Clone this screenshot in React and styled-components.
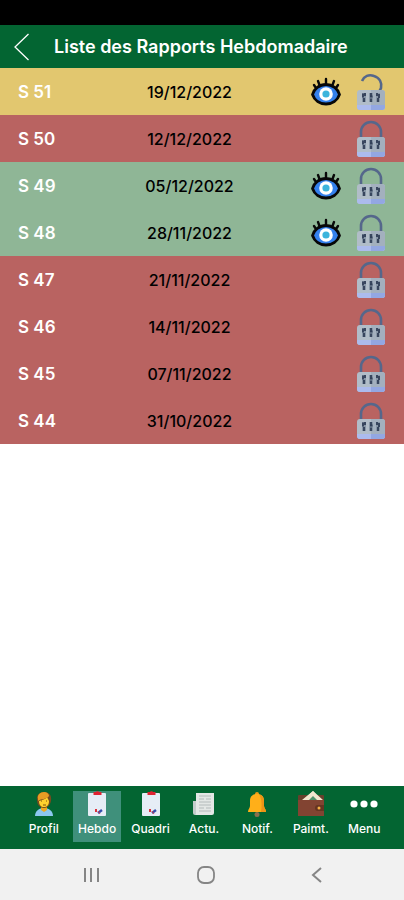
import React, { useState } from "react"
import styled, { createGlobalStyle } from "styled-components"

const GlobalStyle = createGlobalStyle`
    * {
        box-sizing: border-box;
    }

    body {
        margin: 0;

        background: #fff;
        font-family: Inter, "Open Sans", "Liberation Sans", sans-serif;
    }

    button {
        margin: 0;
        padding: 0;

        border: 0;
        background: none;
        font: inherit;
        color: inherit;
        cursor: pointer;
    }

    svg {
        display: block;
    }
`

const StyledScreen = styled.div`
    min-height: 100vh;

    display: flex;
    flex-direction: column;
`

const StyledStatusBar = styled.div`
    height: 25px;

    background: #000;
`

const StyledHeader = styled.header`
    height: 43px;
    padding: 0 14px;

    display: flex;
    align-items: center;
    gap: 24px;

    background: #036532;
    color: #fff;
`

const StyledTitle = styled.h1`
    margin: 0;

    font-size: 18px;
    font-weight: 600;
    line-height: 24px;
    white-space: nowrap;
`

const StyledMain = styled.main`
    flex: 1;
`

const StyledTable = styled.table`
    width: 100%;

    border-collapse: collapse;
    table-layout: fixed;
`

const rowColors = {
    open: "#e2c76f",
    missed: "#b96361",
    done: "#8fb696",
}

const StyledRow = styled.tr`
    height: 47px;

    background: ${props => rowColors[props.$status]};
`

const StyledWeek = styled.th`
    width: 76px;
    padding: 0 0 0 18px;

    color: #fff;
    font-size: 17px;
    font-weight: 600;
    text-align: left;
`

const StyledDate = styled.td`
    padding: 0;

    font-size: 16px;
    font-weight: 500;
    text-align: center;
`

const StyledView = styled.td`
    width: 46px;
    padding: 0;

    button {
        display: block;
        margin: 0 auto;
    }
`

const StyledLock = styled.td`
    width: 55px;
    padding: 0 0 0 7px;
`

const StyledNav = styled.nav`
    height: 63px;
    padding: 5px 16px 7px 20px;

    display: grid;
    grid-template-columns: repeat(7, minmax(0, 1fr));
    gap: 6px;

    background: #036532;
`

const StyledNavItem = styled.button`
    display: flex;
    flex-direction: column;
    align-items: center;
    gap: 4px;

    && {
        background: ${props => props.$active ? "#3f907b" : "none"};
        color: #fff;
        font-size: 12px;
        font-weight: 500;
        line-height: 16px;
    }
`

const StyledSystemBar = styled.div`
    height: 51px;
    padding: 0 76px 0 78px;

    display: flex;
    align-items: center;
    justify-content: space-between;

    background: #f1f1f1;
    color: #858585;
`

const BackIcon = () => (
    <svg width="16" height="28" viewBox="0 0 16 28" fill="none" stroke="#fff" strokeWidth="1.3">
        <path d="M14.5 1 1 14l13.5 13" />
    </svg>
)

const EyeIcon = () => (
    <svg width="32" height="30" viewBox="0 0 32 30">
        <path d="m6 11-2-3M9.500 8 8 4M16 6V2M22.500 8 24 4M26 11l2-3" stroke="#080808" strokeWidth="2.400" strokeLinecap="round" />
        <path d="M2.500 17.500C4 12 9.500 7.500 16 7.500s12 4.500 13.500 10c-2 6-7.500 9.500-13.500 9.500S4.500 23.500 2.500 17.500Z" fill="#3480ec" stroke="#080808" strokeWidth="2.800" strokeLinejoin="round" />
        <circle cx="16" cy="17" r="6.800" fill="#fff" />
        <circle cx="16" cy="17" r="3.600" fill="#3cb4dc" />
    </svg>
)

const LockIcon = ({ open }) => (
    <svg width="30" height="38" viewBox="0 0 30 38">
        <path
            d={open ? "M6 8C8 3 13 1 18 3c6 2 8 7 7 12l-2 4" : "M5 19V12a10 10 0 0 1 20 0v7"}
            fill="none"
            stroke="#55678b"
            strokeWidth="2.600"
        />
        <rect x="1" y="17" width="28" height="20" rx="3" fill="#b1bdc8" />
        <path d="M15 17h11a3 3 0 0 1 3 3v12H15Z" fill="#a3b0be" />
        <path d="M1 32h28v2a3 3 0 0 1-3 3H4a3 3 0 0 1-3-3Z" fill="#acbbed" />
        <path d="M15 32h14v2a3 3 0 0 1-3 3H15Z" fill="#93a7e2" />
        <g fill="#8796a6">
            <rect x="6" y="20" width="4" height="9" />
            <rect x="13" y="20" width="4" height="9" />
            <rect x="20" y="20" width="4" height="9" />
        </g>
        <path d="M7 20.500v4M9 20v3M8 25v4M15 20v2.500M14 23.500h2.500M15 25.500V29M21 20v3M23 21v4M22 25v4" stroke="#303e57" strokeWidth="1.800" />
    </svg>
)

const ProfileIcon = () => (
    <svg width="26" height="26" viewBox="0 0 26 26">
        <path d="M4 25c0-5 4-8 9-8s9 3 9 8Z" fill="#8cc8ef" />
        <path d="M10 14h6v5l-3 2-3-2Z" fill="#eda91f" />
        <path d="M6 9c-1-5 3-8 7-8 5 0 8 3 7 9-1 4-3 7-7 7s-7-3-7-8Z" fill="#754b1f" />
        <path d="M8 10c2-1 6-1 8-4l2 4c0 4-2 6-5 6s-5-2-5-6Z" fill="#ffd22e" />
        <path d="M7 8c-1-4 2-7 6-7 3 0 5 2 5 4-3 4-7 2-11 5Z" fill="#e89d24" />
        <path d="M10 10h1M15 10h1M12 14h3" stroke="#80510e" />
    </svg>
)

const ClipboardIcon = () => (
    <svg width="26" height="26" viewBox="0 0 26 26">
        <rect x="4" y="2" width="18" height="23" rx="1" fill="#e6edf6" />
        <path d="M9.500 1H12c0-1 3-1 3 0h2.500v3h-8Z" fill="#df2332" />
        <path d="M12 18v3" stroke="#dc303b" strokeWidth="2" />
        <path d="m14 22 4-3" stroke="#344dac" strokeWidth="2.400" />
        <path d="m14 20 2 3" stroke="#ca4255" />
    </svg>
)

const NewsIcon = () => (
    <svg width="26" height="26" viewBox="0 0 26 26">
        <path d="M2 10h5v14H4a2 2 0 0 1-2-2Z" fill="#c3cccb" />
        <path d="M5 2h18v20a2 2 0 0 1-2 2H4c1 0 1-1 1-2Z" fill="#e3e7e5" />
        <path d="M8 5h12M8 8h5M15 8h5M8 11h12M8 14h12M8 17h5M15 17h5M8 20h12" stroke="#b4bbbb" />
    </svg>
)

const BellIcon = () => (
    <svg width="26" height="26" viewBox="0 0 26 26">
        <circle cx="13" cy="23.500" r="2.500" fill="#8b704d" />
        <circle cx="13" cy="3" r="2" fill="#f09c16" />
        <path d="M6 15V10c0-5 3-7 7-7s7 2 7 7v5c0 2 2 3 2 6H4c0-3 2-4 2-6Z" fill="#ffaf19" />
        <path d="M15 3c3 1 5 3 5 7v5c0 2 2 3 2 6h-5c1-5 1-13-2-18Z" fill="#ed9416" />
    </svg>
)

const WalletIcon = () => (
    <svg width="28" height="26" viewBox="0 0 28 26">
        <rect x="1" y="4" width="26" height="21" rx="1" fill="#65402c" />
        <path d="m5 11 11-11 10 11Z" fill="#f0e6cf" />
        <path d="m10 11 6-6 6 6Z" fill="#50926c" />
        <path d="M1 9h26v16H1Z" fill="#824432" />
        <path d="m5 9 11-9 10 9h-4l-6-5-6 5Z" fill="#f0e6cf" />
        <path d="M27 14h-6a3 3 0 0 0 0 6h6Z" fill="#653522" />
        <circle cx="22" cy="17" r="1.500" fill="#f4ad42" />
    </svg>
)

const MoreIcon = () => (
    <svg width="28" height="26" viewBox="0 0 28 26" fill="#fff">
        <circle cx="4" cy="13" r="3.600" />
        <circle cx="14" cy="13" r="3.600" />
        <circle cx="24" cy="13" r="3.600" />
    </svg>
)

const RecentsIcon = () => (
    <svg width="26" height="20" viewBox="0 0 26 20" stroke="currentColor" strokeWidth="2">
        <path d="M7 3v14M13 3v14M20 3v14" />
    </svg>
)

const HomeIcon = () => (
    <svg width="20" height="20" viewBox="0 0 20 20" fill="none" stroke="currentColor" strokeWidth="1.800">
        <rect x="2" y="2" width="16" height="16" rx="6" />
    </svg>
)

const ReturnIcon = () => (
    <svg width="20" height="20" viewBox="0 0 20 20" fill="none" stroke="currentColor" strokeWidth="2">
        <path d="m13 3-8 7 8 7" />
    </svg>
)

const reports = [
    { week: 51, date: "19/12/2022", status: "open" },
    { week: 50, date: "12/12/2022", status: "missed" },
    { week: 49, date: "05/12/2022", status: "done" },
    { week: 48, date: "28/11/2022", status: "done" },
    { week: 47, date: "21/11/2022", status: "missed" },
    { week: 46, date: "14/11/2022", status: "missed" },
    { week: 45, date: "07/11/2022", status: "missed" },
    { week: 44, date: "31/10/2022", status: "missed" },
]

const tabs = [
    { label: "Profil", Icon: ProfileIcon },
    { label: "Hebdo", Icon: ClipboardIcon },
    { label: "Quadri", Icon: ClipboardIcon },
    { label: "Actu.", Icon: NewsIcon },
    { label: "Notif.", Icon: BellIcon },
    { label: "Paimt.", Icon: WalletIcon },
    { label: "Menu", Icon: MoreIcon },
]

const ReportRow = ({ report }) => (
    <StyledRow $status={report.status}>
        <StyledWeek scope="row">{`S ${report.week}`}</StyledWeek>
        <StyledDate>{report.date}</StyledDate>
        <StyledView>
            {report.status !== "missed" &&
                <button type="button" aria-label={`Voir S ${report.week}`}>
                    <EyeIcon />
                </button>
            }
        </StyledView>
        <StyledLock>
            <LockIcon open={report.status === "open"} />
        </StyledLock>
    </StyledRow>
)

const App = () => {
    const [activeTab, setActiveTab] = useState("Hebdo")

    return (
        <>
            <GlobalStyle />
            <StyledScreen>
                <StyledStatusBar />
                <StyledHeader>
                    <button type="button" aria-label="Retour">
                        <BackIcon />
                    </button>
                    <StyledTitle>Liste des Rapports Hebdomadaire</StyledTitle>
                </StyledHeader>
                <StyledMain>
                    <StyledTable>
                        <tbody>
                            {reports.map(report => (
                                <ReportRow key={report.week} report={report} />
                            ))}
                        </tbody>
                    </StyledTable>
                </StyledMain>
                <StyledNav>
                    {tabs.map(({ label, Icon }) => (
                        <StyledNavItem
                            key={label}
                            type="button"
                            $active={label === activeTab}
                            onClick={() => setActiveTab(label)}
                        >
                            <Icon />
                            {label}
                        </StyledNavItem>
                    ))}
                </StyledNav>
                <StyledSystemBar>
                    <button type="button" aria-label="Applications"><RecentsIcon /></button>
                    <button type="button" aria-label="Accueil"><HomeIcon /></button>
                    <button type="button" aria-label="Précédent"><ReturnIcon /></button>
                </StyledSystemBar>
            </StyledScreen>
        </>
    )
}

export default App
